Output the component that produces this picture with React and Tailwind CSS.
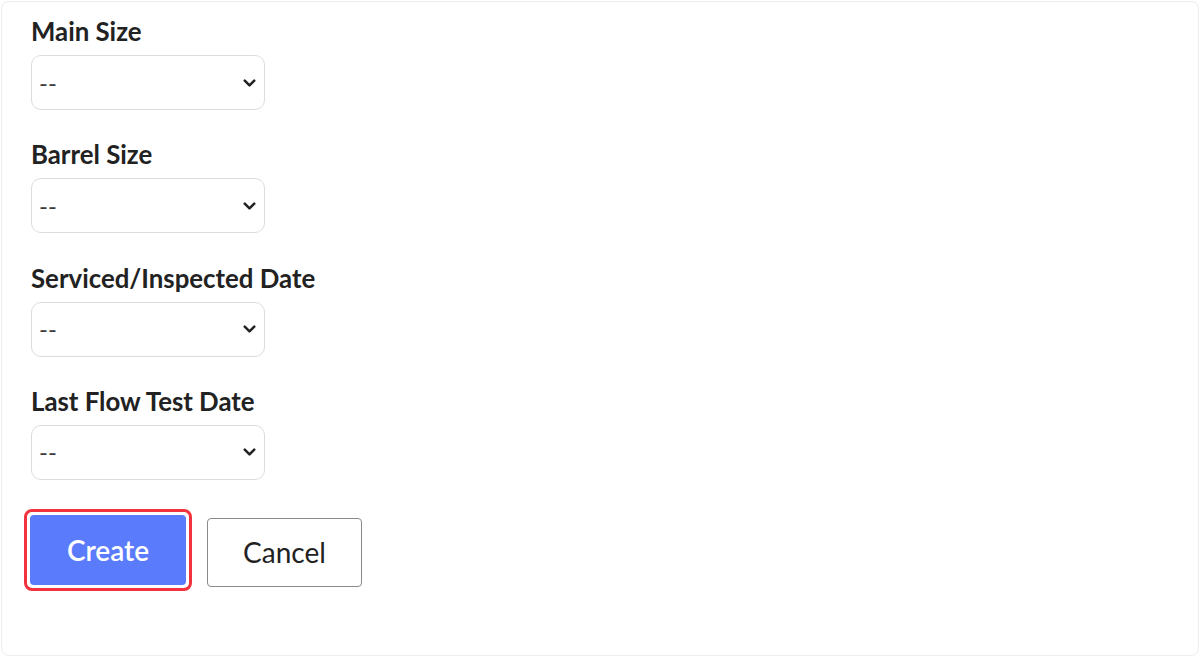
import React from "react";
import { ChevronDown } from "lucide-react";

const fields = [
  "Main Size",
  "Barrel Size",
  "Serviced/Inspected Date",
  "Last Flow Test Date",
];

// Single label + select row
const SelectField = ({ label }) => (
  <div className="flex flex-col">
    <label className="text-[25.8px] font-bold text-[#222] leading-[30px] mb-[9px]">
      {label}
    </label>
    <div className="relative w-[234px] h-[55px]">
      <select className="w-full h-full appearance-none rounded-[10px] border border-[#dcdcdc] bg-white pl-[7px] pr-8 text-[24px] text-[#3a3a3a] outline-none">
        <option>--</option>
      </select>
      <ChevronDown
        className="absolute right-[6px] top-1/2 -translate-y-1/2 w-[19px] h-[19px] text-[#222] pointer-events-none"
        strokeWidth={3.2}
      />
    </div>
  </div>
);

export default function App() {
  return (
    <div
      className="w-[1200px] h-[657px] bg-white p-[1px]"
      style={{ fontFamily: "Lato, 'Liberation Sans', sans-serif" }}
    >
      <div className="h-full rounded-[8px] border border-[#ececf2] bg-white pl-[29px] pt-[14px]">
        <div className="flex flex-col gap-[29.33px]">
          {fields.map((f) => (
            <SelectField key={f} label={f} />
          ))}
        </div>

        <div className="flex items-start gap-[15px] mt-[29px] -ml-[7px]">
          <div className="rounded-[8px] border-[3px] border-[#f2323f] p-[3px]">
            <button className="w-[156px] h-[70px] rounded-[4px] bg-[#5b7bfd] text-white text-[28px] font-semibold">
              Create
            </button>
          </div>
          <button className="mt-[9px] w-[155px] h-[69px] rounded-[4px] border border-[#8a8a8a] bg-white text-[#222] text-[28px]">
            Cancel
          </button>
        </div>
      </div>
    </div>
  );
}
